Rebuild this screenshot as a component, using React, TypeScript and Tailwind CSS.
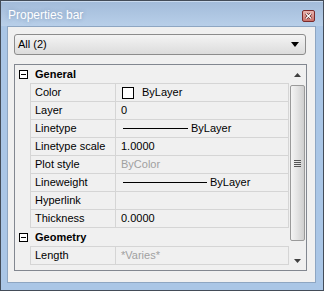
import React from 'react';

type Row = { name: string; value: string; kind?: 'color' | 'line' | 'muted'; lineW?: number };

const GENERAL: Row[] = [
  { name: 'Color', value: 'ByLayer', kind: 'color' },
  { name: 'Layer', value: '0' },
  { name: 'Linetype', value: 'ByLayer', kind: 'line', lineW: 65 },
  { name: 'Linetype scale', value: '1.0000' },
  { name: 'Plot style', value: 'ByColor', kind: 'muted' },
  { name: 'Lineweight', value: 'ByLayer', kind: 'line', lineW: 84 },
  { name: 'Hyperlink', value: '' },
  { name: 'Thickness', value: '0.0000' },
];

const GEOMETRY: Row[] = [{ name: 'Length', value: '*Varies*', kind: 'muted' }];

const Value: React.FC<{ row: Row }> = ({ row }) => {
  if (row.kind === 'color') {
    return (
      <div className="flex items-center gap-[8px] pl-[6px]">
        <span className="w-[12px] h-[12px] border border-black bg-white" />
        <span>{row.value}</span>
      </div>
    );
  }
  if (row.kind === 'line') {
    return (
      <div className="flex items-center gap-[3px] pl-[7px]">
        <span className="h-px bg-black" style={{ width: row.lineW }} />
        <span>{row.value}</span>
      </div>
    );
  }
  return <div className={`pl-[5px] ${row.kind === 'muted' ? 'text-[#a0a0a0]' : ''}`}>{row.value}</div>;
};

const Section: React.FC<{ title: string; rows: Row[] }> = ({ title, rows }) => (
  <div>
    <div className="h-[18px] flex items-center">
      <div className="w-[15px] flex items-center justify-center pl-[1px]">
        <span className="w-[9px] h-[9px] border border-black bg-white flex items-center justify-center">
          <span className="w-[5px] h-px bg-black" />
        </span>
      </div>
      <span className="pl-[5px] font-bold">{title}</span>
    </div>
    <div className="ml-[15px] border-t border-[#d5d5d5]">
      {rows.map((r) => (
        <div key={r.name} className="h-[18px] grid grid-cols-[86px_173px] border-b border-[#d5d5d5]">
          <div className="border-l border-r border-[#d5d5d5] pl-[4px] flex items-center">{r.name}</div>
          <div className="border-r border-[#d5d5d5] flex items-center">
            <Value row={r} />
          </div>
        </div>
      ))}
    </div>
  </div>
);

const Scrollbar: React.FC = () => (
  <div className="w-[17px] flex flex-col bg-[#f0f0f0]">
    <div className="h-[20px] flex items-center justify-center">
      <svg width="7" height="4" viewBox="0 0 7 4"><path d="M0 4 L3.5 0 L7 4 Z" fill="#404040" /></svg>
    </div>
    <div className="mx-[1px] h-[156px] rounded-[2px] border border-[#9a9a9a] bg-gradient-to-r from-[#f4f4f4] via-[#e3e3e3] to-[#cfcfcf] flex items-center justify-center">
      <div className="flex flex-col gap-[1px]">
        <span className="w-[7px] h-px bg-[#555]" />
        <span className="w-[7px] h-px bg-[#555]" />
        <span className="w-[7px] h-px bg-[#555]" />
        <span className="w-[7px] h-px bg-[#555]" />
      </div>
    </div>
    <div className="flex-1 flex items-end justify-center pb-[7px]">
      <svg width="7" height="4" viewBox="0 0 7 4"><path d="M0 0 L7 0 L3.5 4 Z" fill="#404040" /></svg>
    </div>
  </div>
);

export default function App() {
  return (
    <div
      className="w-[324px] h-[291px] border border-[#434c58] bg-[#aac6e6] flex flex-col text-[11px] text-black"
      style={{ fontFamily: '"Liberation Sans", Arial, sans-serif' }}
    >
      <div className="h-[25px] pl-[6px] pr-[7px] flex items-center justify-between bg-gradient-to-b from-[#a3bcda] to-[#b8cfe9] border-t border-[#c9daee]">
        <span className="text-[12px] text-white pl-[1px] pt-[1px] [text-shadow:0_0_4px_rgba(40,70,110,0.35)]">Properties bar</span>
        <div className="w-[13px] h-[12px] mr-[1px] mt-[3px] rounded-[2px] border border-[#7b2b2b] bg-gradient-to-b from-[#e9b4ae] to-[#c9716a] flex items-center justify-center">
          <svg width="7" height="6" viewBox="0 0 7 6">
            <path d="M1 0.5 L6 5.5 M6 0.5 L1 5.5" stroke="#5a1f1f" strokeWidth="2.6" />
            <path d="M1 0.5 L6 5.5 M6 0.5 L1 5.5" stroke="#ffffff" strokeWidth="1.4" />
          </svg>
        </div>
      </div>
      <div className="flex-1 mx-[6px] mr-[7px] mb-[7px] border border-[#8ea6c2] bg-[#f0f0f0] flex flex-col">
        <div className="mt-[7px] ml-[6px] w-[292px] h-[21px] rounded-[3px] border border-[#8c8c8c] bg-gradient-to-b from-[#f4f4f4] to-[#dcdcdc] flex items-center justify-between pl-[3px] pr-[6px]">
          <span>All (2)</span>
          <svg width="8" height="5" viewBox="0 0 8 5"><path d="M0 0 L8 0 L4 5 Z" fill="#000" /></svg>
        </div>
        <div className="mt-[9px] ml-[6px] w-[293px] h-[207px] border border-[#828790] bg-[#f0f0f0] flex">
          <div className="w-[274px]">
            <Section title="General" rows={GENERAL} />
            <Section title="Geometry" rows={GEOMETRY} />
          </div>
          <Scrollbar />
        </div>
      </div>
    </div>
  );
}
